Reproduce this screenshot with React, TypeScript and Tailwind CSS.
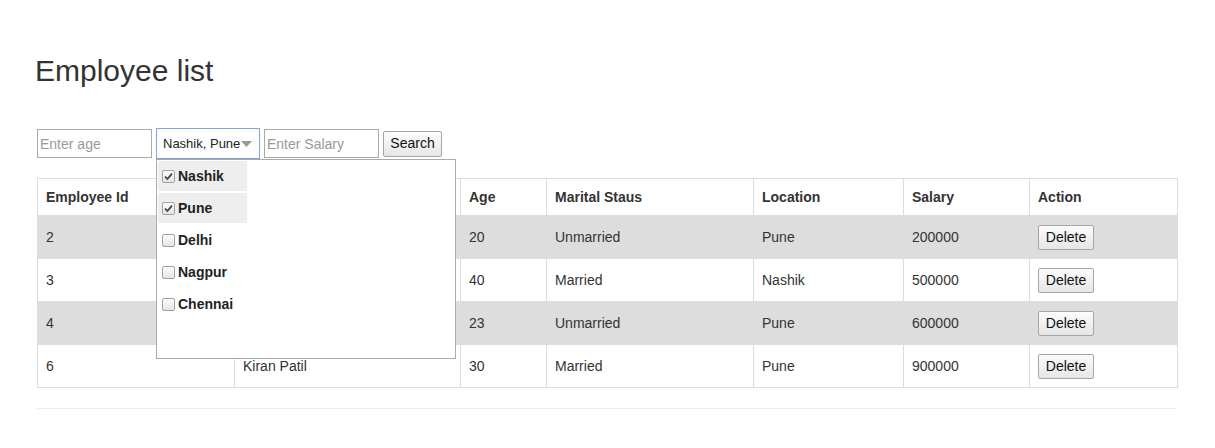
import React from "react";

const rows = [
  { id: "2", name: "Amit Shah", age: "20", status: "Unmarried", loc: "Pune", salary: "200000" },
  { id: "3", name: "Rahul Joshi", age: "40", status: "Married", loc: "Nashik", salary: "500000" },
  { id: "4", name: "Sneha Patil", age: "23", status: "Unmarried", loc: "Pune", salary: "600000" },
  { id: "6", name: "Kiran Patil", age: "30", status: "Married", loc: "Pune", salary: "900000" },
];

const cities = [
  { name: "Nashik", checked: true },
  { name: "Pune", checked: true },
  { name: "Delhi", checked: false },
  { name: "Nagpur", checked: false },
  { name: "Chennai", checked: false },
];

function Check({ checked }: { checked: boolean }) {
  return (
    <span className="w-[13px] h-[13px] rounded-[2px] border border-[#a0a0a0] bg-gradient-to-b from-[#fdfdfd] to-[#e4e4e4] flex items-center justify-center shrink-0">
      {checked && (
        <svg width="9" height="9" viewBox="0 0 9 9">
          <path d="M1 4.6 L3.4 7 L8 1.6" fill="none" stroke="#444" strokeWidth="1.8" />
        </svg>
      )}
    </span>
  );
}

export default function App() {
  return (
    <div className="min-h-[448px] bg-white text-[#333] text-[14px] font-['Liberation_Sans',Arial,sans-serif]">
      <div className="w-[1170px] ml-[22px] px-[15px] pt-[54px]">
        <h2 className="text-[30px] leading-[33px] font-normal ml-[-2px]">Employee list</h2>
        <div className="flex items-center gap-[4px] mt-[41px]">
          <input
            placeholder="Enter age"
            className="w-[115px] h-[29px] border border-[#a9a9a9] px-[2px] text-[14px] placeholder:text-[#999] outline-none"
          />
          <div className="relative">
            <div className="w-[104px] h-[31px] border border-[#7aa7e4] bg-white flex items-center pl-[6px] pr-[7px] justify-between text-[13px] text-[#222]">
              <span>Nashik, Pune</span>
              <svg width="11" height="6" viewBox="0 0 11 6">
                <path d="M0 0 L11 0 L5.5 6 Z" fill="#999" />
              </svg>
            </div>
            <div className="absolute left-0 top-[31px] w-[300px] h-[200px] bg-white border border-[#a9a9a9] z-10 p-[1px]">
              {cities.map((c) => (
                <div
                  key={c.name}
                  className={`w-[89px] h-[30px] mb-[2px] flex items-center pl-[4px] gap-[3px] font-bold text-[#222] ${c.checked ? "bg-[#eeeeee]" : ""}`}
                >
                  <Check checked={c.checked} />
                  <span>{c.name}</span>
                </div>
              ))}
            </div>
          </div>
          <input
            placeholder="Enter Salary"
            className="w-[115px] h-[29px] border border-[#a9a9a9] px-[2px] text-[14px] placeholder:text-[#999] outline-none"
          />
          <button className="w-[59px] h-[26px] border border-[#a6a6a6] rounded-[2px] bg-gradient-to-b from-[#fcfcfc] to-[#e6e6e6] text-[14px] text-[#111]">
            Search
          </button>
        </div>
        <table className="mt-[19px] w-[1140px] table-fixed border-collapse border border-[#ddd]">
          <colgroup>
            <col className="w-[197px]" />
            <col className="w-[226px]" />
            <col className="w-[86px]" />
            <col className="w-[207px]" />
            <col className="w-[150px]" />
            <col className="w-[126px]" />
            <col className="w-[148px]" />
          </colgroup>
          <thead>
            <tr className="h-[37px]">
              {["Employee Id", "Employee Name", "Age", "Marital Staus", "Location", "Salary", "Action"].map((h) => (
                <th key={h} className="border border-[#ddd] px-[8px] text-left font-bold align-middle">
                  {h}
                </th>
              ))}
            </tr>
          </thead>
          <tbody>
            {rows.map((r, i) => (
              <tr key={r.id} className={`h-[43px] ${i % 2 === 0 ? "bg-[#dddddd]" : "bg-white"}`}>
                <td className="border border-[#ddd] px-[8px] align-middle">{r.id}</td>
                <td className="border border-[#ddd] px-[8px] align-middle">{r.name}</td>
                <td className="border border-[#ddd] px-[8px] align-middle">{r.age}</td>
                <td className="border border-[#ddd] px-[8px] align-middle">{r.status}</td>
                <td className="border border-[#ddd] px-[8px] align-middle">{r.loc}</td>
                <td className="border border-[#ddd] px-[8px] align-middle">{r.salary}</td>
                <td className="border border-[#ddd] px-[8px] align-middle">
                  <button className="w-[56px] h-[25px] border border-[#a6a6a6] rounded-[2px] bg-gradient-to-b from-[#fcfcfc] to-[#e6e6e6] text-[14px] text-[#111] block">
                    Delete
                  </button>
                </td>
              </tr>
            ))}
          </tbody>
        </table>
        <hr className="mt-[20px] border-0 border-t border-[#eee]" />
      </div>
    </div>
  );
}
